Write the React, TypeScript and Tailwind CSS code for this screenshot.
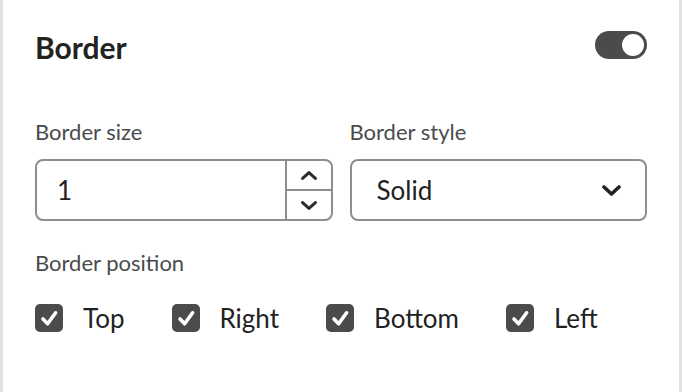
import { useState } from "react";

const positions = ["Top", "Right", "Bottom", "Left"];

function Chevron({ up = false }: { up?: boolean }) {
  return (
    <svg width="16" height="9" viewBox="0 0 16 9" className="text-[#2c2c2c]">
      <polyline
        points={up ? "1.6,7.4 8,1.6 14.4,7.4" : "1.6,1.6 8,7.4 14.4,1.6"}
        fill="none"
        stroke="currentColor"
        strokeWidth="3"
        strokeLinecap="round"
        strokeLinejoin="round"
      />
    </svg>
  );
}

function CheckBox({ label, checked, onToggle }: { label: string; checked: boolean; onToggle: () => void }) {
  return (
    <label className="flex items-center gap-[20px] cursor-pointer" onClick={onToggle}>
      <span className={`w-[28px] h-[28px] rounded-[5px] flex items-center justify-center ${checked ? "bg-[#4b4b4b]" : "border-2 border-[#6e6e6e] bg-white"}`}>
        {checked && (
          <svg width="28" height="28" viewBox="0 0 28 28">
            <polyline
              points="8,15 12.6,19.8 20.6,8.8"
              fill="none"
              stroke="white"
              strokeWidth="3.6"
              strokeLinecap="round"
              strokeLinejoin="round"
            />
          </svg>
        )}
      </span>
      <span className="text-[26px] leading-[32px] text-[#222222]">{label}</span>
    </label>
  );
}

export default function App() {
  const [enabled, setEnabled] = useState(true);
  const [size, setSize] = useState(1);
  const [checked, setChecked] = useState<Record<string, boolean>>({ Top: true, Right: true, Bottom: true, Left: true });

  return (
    <div className="h-[392px] w-[682px] bg-white border-x-[3px] border-[#e1e1e1] px-[32px] pt-[31px] font-['Lato',sans-serif]">
      {/* header */}
      <div className="flex items-start justify-between">
        <h2 className="text-[30px] leading-[34px] -mt-[1px] font-bold text-[#222222]">Border</h2>
        <button
          onClick={() => setEnabled(!enabled)}
          className={`w-[52px] h-[28px] rounded-full flex items-center px-[3px] ${enabled ? "bg-[#4b4b4b] justify-end" : "bg-[#b3b3b3] justify-start"}`}
        >
          <span className="w-[22px] h-[22px] rounded-full bg-white" />
        </button>
      </div>

      {/* size + style */}
      <div className="grid grid-cols-2 gap-x-[17px] mt-[55px]">
        <div>
          <div className="text-[22px] leading-[26px] text-[#4b4b4b] mb-[14px]">Border size</div>
          <div className="h-[62px] rounded-[8px] border-2 border-[#8e8e8e] flex overflow-hidden">
            <div className="flex-1 flex items-center pl-[20px] text-[26px] text-[#222222]">{size}</div>
            <div className="w-[46px] border-l-2 border-[#8e8e8e] flex flex-col">
              <button onClick={() => setSize(size + 1)} className="flex-1 flex items-center justify-center">
                <Chevron up />
              </button>
              <button onClick={() => setSize(Math.max(0, size - 1))} className="flex-1 flex items-center justify-center border-t-2 border-[#8e8e8e]">
                <Chevron />
              </button>
            </div>
          </div>
        </div>
        <div>
          <div className="text-[22px] leading-[26px] text-[#4b4b4b] mb-[14px]">Border style</div>
          <div className="h-[62px] rounded-[8px] border-2 border-[#8e8e8e] flex items-center justify-between pl-[25px] pr-[24px]">
            <span className="text-[26px] text-[#222222]">Solid</span>
            <svg width="19" height="11" viewBox="0 0 19 11">
              <polyline points="2,2 9.5,9 17,2" fill="none" stroke="#222222" strokeWidth="3.6" strokeLinecap="round" strokeLinejoin="round" />
            </svg>
          </div>
        </div>
      </div>

      {/* position */}
      <div className="text-[22px] leading-[26px] text-[#4b4b4b] mt-[29px]">Border position</div>
      <div className="flex items-center gap-x-[47px] mt-[26px]">
        {positions.map((p) => (
          <CheckBox key={p} label={p} checked={checked[p]} onToggle={() => setChecked({ ...checked, [p]: !checked[p] })} />
        ))}
      </div>
    </div>
  );
}
